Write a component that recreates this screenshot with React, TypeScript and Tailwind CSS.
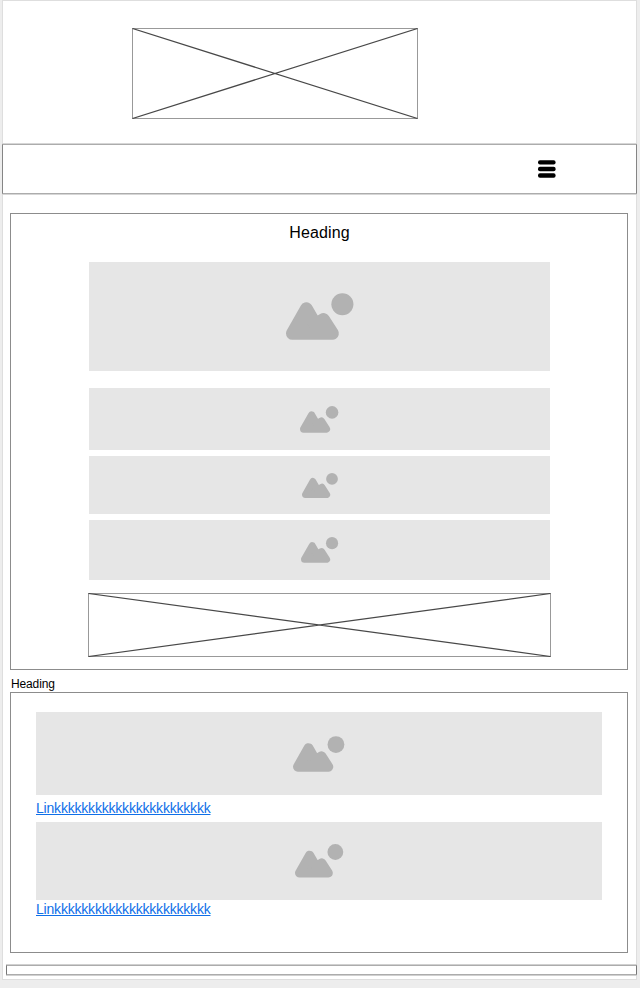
function CrossBox({ className, w, h }: { className: string; w: number; h: number }) {
  return (
    <div className={className}>
      <svg className="block h-full w-full" viewBox={`0 0 ${w} ${h}`} fill="none">
        <rect x="0.5" y="0.5" width={w - 1} height={h - 1} stroke="#999999" />
        <path d={`M0.5 0.5L${w - 0.5} ${h - 0.5}M0.5 ${h - 0.5}L${w - 0.5} 0.5`} stroke="#484848" strokeWidth="1.2" />
      </svg>
    </div>
  );
}

function Picture({ className }: { className: string }) {
  return (
    <div className={`flex items-center justify-center bg-[#e6e6e6] ${className}`}>
      <svg className="h-[43%] overflow-visible" viewBox="0 0 202 140" fill="#b2b2b2">
        <path
          d="M19 121L61 47L88 94L112 79L139 121Z"
          stroke="#b2b2b2"
          strokeWidth="38"
          strokeLinejoin="round"
        />
        <circle cx="168.5" cy="33.5" r="33" />
      </svg>
    </div>
  );
}

function Link({ className }: { className: string }) {
  return (
    <a href="#" className={`block w-fit text-sm leading-4 tracking-[-0.2px] whitespace-nowrap text-[#0f6fe8] underline ${className}`}>
      Linkkkkkkkkkkkkkkkkkkkkkkk
    </a>
  );
}

export default function App() {
  return (
    <div className="h-[988px] w-[640px] overflow-hidden bg-[#ededed] pl-[2px] font-['Liberation_Sans',Arial,sans-serif] text-black">
      <div className="flex h-[980px] w-[635px] flex-col bg-white shadow-[inset_0_0_0_1px_#dedede]">
        <CrossBox className="mt-7 ml-[130px] h-[91px] w-[286px]" w={286} h={91} />
        <nav className="mt-[25px] flex h-[50px] shrink-0 items-center justify-end border border-x-[#858585] border-y-[#acacac] pr-[80.5px] shadow-[0_-1px_0_#d6d6d6,0_1px_0_#d6d6d6]">
          <svg className="h-[18px] w-[18px]" viewBox="0 0 18 18">
            <rect x="0" y="0.2" width="17.6" height="4.4" rx="2" />
            <rect x="0" y="6.8" width="17.6" height="4.4" rx="2" />
            <rect x="0" y="13.3" width="17.6" height="4.4" rx="2" />
          </svg>
        </nav>
        <main className="mt-[19px] ml-2 flex h-[457px] w-[618px] shrink-0 flex-col border border-[#8c8c8c] pl-[78px]">
          <h1 className="mt-[10px] h-[18px] w-[461px] text-center text-base leading-[18px] tracking-[0.14px]">Heading</h1>
          <Picture className="mt-5 h-[109px] w-[461px]" />
          <Picture className="mt-[17px] h-[62px] w-[461px]" />
          <Picture className="mt-[6px] h-[58px] w-[461px]" />
          <Picture className="mt-[6px] h-[60px] w-[461px]" />
          <CrossBox className="-ml-px mt-[13px] h-[64px] w-[463px]" w={463} h={64} />
        </main>
        <h2 className="mt-[7px] ml-[9px] h-[15px] shrink-0 text-xs leading-[14px] tracking-[-0.13px]">Heading</h2>
        <section className="ml-2 flex h-[261px] w-[618px] shrink-0 flex-col border border-[#8c8c8c] pl-[25px]">
          <Picture className="mt-[19px] h-[83px] w-[566px]" />
          <Link className="mt-[5px]" />
          <Picture className="mt-[6px] h-[78px] w-[566px]" />
          <Link className="mt-[1px]" />
        </section>
        <footer className="mt-3 ml-1 h-[10px] w-[631px] shrink-0 border border-x-[#777777] border-y-[#acacac] shadow-[0_-1px_0_#d0d0d0,0_1px_0_#d0d0d0]" />
      </div>
    </div>
  );
}
